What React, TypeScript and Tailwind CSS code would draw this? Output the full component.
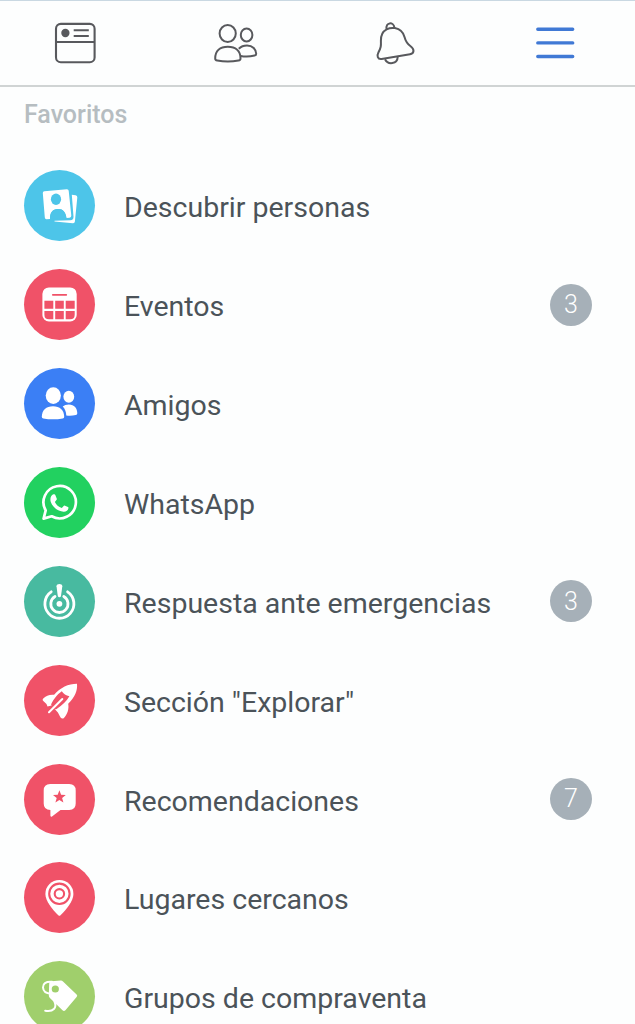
import React from "react";

interface MenuItem {
  label: string;
  color: string;
  icon: React.ReactNode;
  count?: number;
}

/*
Header icons
*/
const tabs = [
  {
    name: "feed",
    icon: (
      <g stroke="#58595d" strokeWidth="2.1">
        <rect x="3" y="1.9" width="38.6" height="38.3" rx="4.8" />
        <path d="M3 20H41.6M20.7 8.2H35.8M20.7 14H35.8" />
        <circle cx="12.4" cy="11" r="3.1" fill="#58595d" />
      </g>
    ),
  },
  {
    name: "friends",
    icon: (
      <g stroke="#58595d" strokeWidth="2">
        <ellipse cx="14.7" cy="11.5" rx="8.1" ry="8.5" />
        <ellipse cx="33.6" cy="12.9" rx="5.8" ry="6.5" />
        <path d="M2.2 36.5C2.2 29 7 24.8 14.8 24.8S27.5 29 27.5 36.5Q27.5 38.2 25.5 38.5Q14.8 40.5 4.2 38.5Q2.2 38.2 2.2 36.5Z" />
        <path d="M25.8 26.7Q29 23.5 34 23.5C39.8 23.5 43 27.5 43.2 31.7Q43.2 33.3 41.6 33.6Q34.5 35.2 27.6 34" />
      </g>
    ),
  },
  {
    name: "notifications",
    icon: (
      <g stroke="#58595d" strokeWidth="2" strokeLinejoin="round">
        <path d="M13.6 7.3C12.2 -.2 20.7 -.4 21.4 5.7" />
        <path d="M13.6 7.3Q17.6 5.4 21.9 6.1C27 7.1 30.2 10 31.6 15.2C32.8 20 34.3 21.8 37.6 24.2C42.2 27.6 40.8 31.5 37 32.2L8.6 37C4.5 37.5 3.7 33.7 5.4 30.5C8 25.4 8.1 24 7.9 19C7.6 13 9.5 9.5 13.6 7.3Z" />
        <path d="M12 37.3C14.8 43.1 24.5 42.5 24.7 34.8" />
      </g>
    ),
  },
  {
    name: "menu",
    icon: <path d="M4.8 7.3H39.7M4.8 20.9H39.7M4.8 34.5H39.7" stroke="#4079d5" strokeWidth="3.4" strokeLinecap="round" />,
  },
];

/*
Menu entries, every icon is drawn on the 71x71 circle
*/
const items: MenuItem[] = [
  {
    label: "Descubrir personas",
    color: "bg-[#4dc5e9] text-[#4dc5e9]",
    icon: (
      <>
        <path d="M20.4 21.2L42.8 19.2Q44.5 19.1 44.7 20.8L47.3 45.6Q47.4 47.5 45.6 47.7L42.4 48C41.6 41.2 38.3 38.6 33.8 39C28.5 39.5 25.9 42.3 26 48.9L22.6 49.2Q21 49.3 20.8 47.6L18.8 23.1Q18.7 21.4 20.4 21.2Z" />
        <ellipse cx="32" cy="29.3" rx="5.1" ry="5.7" fill="currentColor" />
        <path d="M26 48.9C25.9 42.3 28.5 39.5 33.8 39C38.3 38.6 41.6 41.2 42.4 48Z" fill="currentColor" />
        <path d="M47.8 24.8L51.6 25.3Q53.5 25.6 53.3 27.5L50.9 51.6Q50.7 53.5 48.8 53.3L30.5 51.4V50.8L46.3 50.3Q49.7 49.9 49.5 46.8Z" />
      </>
    ),
  },
  {
    label: "Eventos",
    color: "bg-[#f05268] text-[#f05268]",
    count: 3,
    icon: (
      <>
        <rect x="18.4" y="18.4" width="34.3" height="34" rx="6.5" />
        <path d="M28.8 25.8H42.3" stroke="currentColor" strokeWidth="1.7" strokeLinecap="round" />
        <path
          fill="currentColor"
          d="M20.4 31.8H29.3V39.8H20.4ZM31.2 31.8H39.8V39.8H31.2ZM41.7 31.8H50.7V39.8H41.7ZM20.4 42H29.3V50.3H25Q20.4 50.3 20.4 45.7ZM31.2 42H39.8V50.3H31.2ZM41.7 42H50.7V45.7Q50.7 50.3 46.1 50.3H41.7Z"
        />
      </>
    ),
  },
  {
    label: "Amigos",
    color: "bg-[#3b7ff5]",
    icon: (
      <>
        <ellipse cx="29.3" cy="27.6" rx="7.6" ry="8.3" />
        <ellipse cx="44.8" cy="28.7" rx="5.4" ry="6" />
        <path d="M17.8 48.8C17.9 42 22.2 38.2 29 38.2S40.1 42 40.2 48.8Q40.2 50.2 38.7 50.5Q29 52.2 19.3 50.5Q17.8 50.2 17.8 48.8Z" />
        <path d="M38.7 38.5Q41 36.6 44.8 36.6C50.4 36.6 53.2 40.3 53.3 45.3Q53.3 46.8 51.8 47.1Q47.2 48 42.3 47.5C42.1 43.7 41 40.7 38.7 38.5Z" />
      </>
    ),
  },
  {
    label: "WhatsApp",
    color: "bg-[#22d160]",
    icon: (
      <>
        <path
          d="M27.7 49.3A16.2 16.2 0 1 0 21.7 43.4L19.6 51.6Z"
          fill="none"
          stroke="white"
          strokeWidth="2.7"
          strokeLinejoin="round"
        />
        <path d="M29.4 27.2H30.2Q31 27.1 31.3 28L32.7 31.4Q33 32 32.6 32.7L30.9 35C32.2 38 34.6 40 37.8 41.1L39.9 38.8Q40.3 38.3 41 38.7L44 40.1Q44.6 40.4 44.4 41.2C44.1 43.5 41.8 45 39.6 44.8C33.5 44.2 28.5 39.8 26.9 35.2C25.7 31.9 26.7 28.3 29.4 27.2Z" />
      </>
    ),
  },
  {
    label: "Respuesta ante emergencias",
    color: "bg-[#48baa0]",
    count: 3,
    icon: (
      <>
        <g fill="none" stroke="white" strokeWidth="2.8" strokeLinecap="round">
          <path d="M27.2 25.8A14.5 14.5 0 1 0 43.6 25.8" />
          <path d="M31 30.5A8.6 8.6 0 1 0 39.8 30.5" />
        </g>
        <path d="M32.5 20.3C32.3 17.2 38.5 17.2 38.3 20.3L37 30Q36.7 31.3 35.4 31.3T33.8 30Z" />
        <circle cx="35.4" cy="37.8" r="2.9" />
      </>
    ),
  },
  {
    label: 'Sección "Explorar"',
    color: "bg-[#f05268] text-[#f05268]",
    icon: (
      <>
        <path d="M53 18.7C53.7 25.5 51 32 44.2 38.7C45.2 43.8 43.5 49.2 39.7 53.2Q37 54.2 36 51.5L33.9 47.6L30 43.2L27.5 40.5L23.5 41.6Q22.8 38.5 19.3 36Q18 35 19 33.8C22 30.4 25.9 29.4 30.1 29.8C36.3 22.5 44.3 18.7 53 18.7Z" />
        <path d="M37.8 26.2Q40.3 30.2 45.4 31.2Q41.5 38 32.6 43.9Q31 44.7 29.8 43.4L27.8 41.2Q26.5 39.8 27.6 38.2Q31.6 30.5 37.8 26.2Z" fill="currentColor" />
        <path d="M38.3 34L25 47.2" stroke="white" strokeWidth="2" strokeLinecap="round" />
      </>
    ),
  },
  {
    label: "Recomendaciones",
    color: "bg-[#f05268] text-[#f05268]",
    count: 7,
    icon: (
      <>
        <path d="M26.2 20H45.2Q51.7 20 51.7 26.5V39.5Q51.7 46 45.2 46H36.5L28 52.5Q26.4 53.3 26.4 51.6V46Q19.7 46 19.7 39.5V26.5Q19.7 20 26.2 20Z" />
        <path d="M35.4 26.2L37.1 30.7L41.8 31L38.1 34L39.4 38.6L35.4 36L31.4 38.6L32.7 34L29 31L33.7 30.7Z" fill="currentColor" />
      </>
    ),
  },
  {
    label: "Lugares cercanos",
    color: "bg-[#f05268] text-[#f05268]",
    icon: (
      <>
        <path d="M35.4 17.9A14 14 0 0 1 49.4 31.9C49.4 39 42.5 47.2 36.5 53.3Q35.4 54.3 34.3 53.3C28.3 47.2 21.4 39 21.4 31.9A14 14 0 0 1 35.4 17.9Z" />
        <g fill="none" stroke="currentColor" strokeWidth="2.1">
          <circle cx="35.4" cy="31.8" r="10.2" />
          <circle cx="35.4" cy="31.8" r="4.7" />
        </g>
      </>
    ),
  },
  {
    label: "Grupos de compraventa",
    color: "bg-[#a0cf6c] text-[#a0cf6c]",
    icon: (
      <>
        <path d="M27.5 20.2L36.7 19.6Q38 19.5 39 20.4L52.6 33.5Q53.9 34.8 52.6 36.1L41.4 49.2Q40 50.6 38.5 49.3L25.9 37Q24.7 35.8 24.8 34L25.2 22.5Q25.3 20.4 27.5 20.2Z" />
        <circle cx="31.3" cy="28" r="3.6" fill="currentColor" />
        <path
          d="M28 20.8C21.5 20.4 18.8 22.7 19 26.5C19.2 30.2 22.5 32.5 27 32.8M30.5 40.5C33.2 46.8 29.3 51.2 21.2 49.7"
          fill="none"
          stroke="white"
          strokeWidth="2"
          strokeLinecap="round"
        />
      </>
    ),
  },
];

const MenuRow = ({ item }: { item: MenuItem }) => {
  return (
    <li className="flex h-[98.9px] items-center pr-[43px] pl-6">
      <div className={"h-[71px] w-[71px] shrink-0 rounded-full " + item.color}>
        <svg viewBox="0 0 71 71" className="h-full w-full" fill="white">
          {item.icon}
        </svg>
      </div>
      <span className="mt-[5px] ml-[29px] text-[28.5px] leading-8 whitespace-nowrap">
        {item.label}
      </span>
      {item.count && (
        <span className="ml-auto flex h-[42px] w-[42px] items-center justify-center rounded-full bg-[#a6b0b8] text-[25px] font-light text-white">
          {item.count}
        </span>
      )}
    </li>
  );
};

const App = () => {
  return (
    <main className="h-[1024px] w-[635px] overflow-hidden bg-[#fdfefe] font-['Roboto',sans-serif] text-[#4b5359]">
      <nav className="flex h-[87px] items-center gap-[116px] border-t border-b-2 border-t-[#c9d8e2] border-b-[#d0d4d4] pl-[53px]">
        {tabs.map((tab) => (
          <svg key={tab.name} viewBox="0 0 44 42" className="h-[42px] w-11 overflow-visible" fill="none">
            {tab.icon}
          </svg>
        ))}
      </nav>
      <h2 className="h-[69.3px] pt-[10px] pl-6 text-[25px] leading-9 font-medium text-[#b6bdc1]">
        Favoritos
      </h2>
      <ul>
        {items.map((item) => (
          <MenuRow key={item.label} item={item} />
        ))}
      </ul>
    </main>
  );
};

export default App;
